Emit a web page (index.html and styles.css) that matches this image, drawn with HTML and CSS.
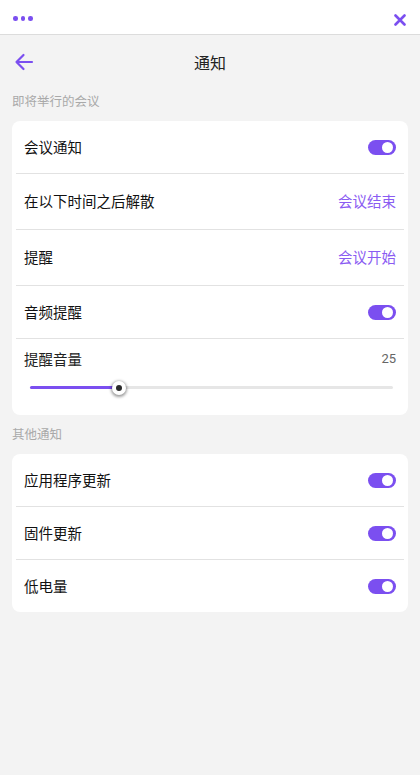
FILE: index.html
```html
<!DOCTYPE html>
<html lang="zh-CN">
<head>
  <meta charset="UTF-8" />
  <meta name="viewport" content="width=device-width, initial-scale=1.0" />
  <title>通知</title>
  <link rel="stylesheet" href="styles.css">
</head>
<body>
  <div class="topbar">
    <div class="dots"><span></span><span></span><span></span></div>
    <svg class="close" width="12" height="12" viewBox="0 0 12 12">
      <path d="M1.5 1.5 L10.5 10.5 M10.5 1.5 L1.5 10.5" stroke="#7b4ff0" stroke-width="2.6" stroke-linecap="round" fill="none"/>
    </svg>
  </div>

  <div class="header">
    <svg class="back" width="20" height="18" viewBox="0 0 20 18">
      <path d="M18 9 H2.5 M9.5 2 L2.5 9 L9.5 16" stroke="#7b4ff0" stroke-width="2.2" stroke-linecap="round" stroke-linejoin="round" fill="none"/>
    </svg>
    <h1>通知</h1>
  </div>

  <div class="section-label">即将举行的会议</div>
  <div class="card">
    <div class="row">
      <span>会议通知</span>
      <span class="toggle"></span>
    </div>
    <div class="row tall">
      <span>在以下时间之后解散</span>
      <span class="link">会议结束</span>
    </div>
    <div class="row tall">
      <span>提醒</span>
      <span class="link">会议开始</span>
    </div>
    <div class="row">
      <span>音频提醒</span>
      <span class="toggle"></span>
    </div>
    <div class="volume">
      <div class="volume-head">
        <span>提醒音量</span>
        <span class="value">25</span>
      </div>
      <div class="slider">
        <div class="fill" style="width: 24.5%"></div>
        <div class="thumb" style="left: 24.5%"></div>
      </div>
    </div>
  </div>

  <div class="section-label">其他通知</div>
  <div class="card">
    <div class="row">
      <span>应用程序更新</span>
      <span class="toggle"></span>
    </div>
    <div class="row">
      <span>固件更新</span>
      <span class="toggle"></span>
    </div>
    <div class="row">
      <span>低电量</span>
      <span class="toggle"></span>
    </div>
  </div>
</body>
</html>
```

FILE: styles.css
```css
body {
  margin: 0;
  background: #f3f3f3;
  font-family: "Noto Sans CJK SC", "Noto Sans", sans-serif;
  color: #111;
  height: 775px;
}
.topbar {
  height: 35px;
  background: #fff;
  border-bottom: 1px solid #dcdcdc;
  display: flex;
  align-items: center;
  justify-content: space-between;
  padding: 0 14px 0 13px;
  box-sizing: border-box;
}
.dots {
  display: flex;
  gap: 3px;
  margin-top: 3px;
}
.dots span {
  width: 4.5px;
  height: 4.5px;
  border-radius: 50%;
  background: #7b4ff0;
}
.close {
  margin-top: 6px;
}
.header {
  height: 54px;
  display: flex;
  align-items: center;
  padding: 0 14px;
}
.header h1 {
  flex: 1;
  margin: 0 20px 0 0;
  text-align: center;
  font-size: 16px;
  font-weight: 400;
  color: #222;
}
.section-label {
  font-size: 12.5px;
  color: #a9a9a9;
  padding: 0 12px;
  height: 22px;
  line-height: 22px;
  margin: 1px 0 9px;
}
.card {
  background: #fff;
  border-radius: 8px;
  margin: 0 12px 8px;
  padding: 0 4px;
}
.row {
  height: 52px;
  display: flex;
  align-items: center;
  justify-content: space-between;
  padding: 0 8px;
  font-size: 14.5px;
  border-bottom: 1px solid #e2e2e2;
}
.row span:first-child {
  margin-bottom: 2px;
}
.row.tall {
  height: 55px;
}
.card > .row:last-child {
  border-bottom: none;
}
.link {
  color: #8a5cf2;
  margin-bottom: 2px;
}
.toggle {
  width: 28px;
  height: 15px;
  border-radius: 8px;
  background: #7b4ff0;
  position: relative;
}
.toggle::after {
  content: "";
  position: absolute;
  right: 3px;
  top: 2px;
  width: 11px;
  height: 11px;
  border-radius: 50%;
  background: #fff;
}
.volume {
  height: 76px;
  padding: 0 8px;
}
.volume-head {
  display: flex;
  justify-content: space-between;
  align-items: center;
  height: 38px;
  font-size: 14.5px;
  color: #222;
}
.value {
  font-family: Roboto, "Noto Sans", sans-serif;
  font-size: 13px;
  color: #666;
}
.slider {
  position: relative;
  height: 3px;
  background: #e6e6e6;
  border-radius: 2px;
  margin: 9px 3px 0 6px;
}
.fill {
  height: 100%;
  background: #7b4ff0;
  border-radius: 2px;
}
.thumb {
  position: absolute;
  top: 50%;
  width: 14px;
  height: 14px;
  margin: -7px 0 0 -7px;
  border-radius: 50%;
  background: #fff;
  box-shadow: 0 1px 3px 1px rgba(0, 0, 0, 0.4);
}
.thumb::after {
  content: "";
  position: absolute;
  left: 4px;
  top: 4px;
  width: 6px;
  height: 6px;
  border-radius: 50%;
  background: #2a2a2a;
}
```
